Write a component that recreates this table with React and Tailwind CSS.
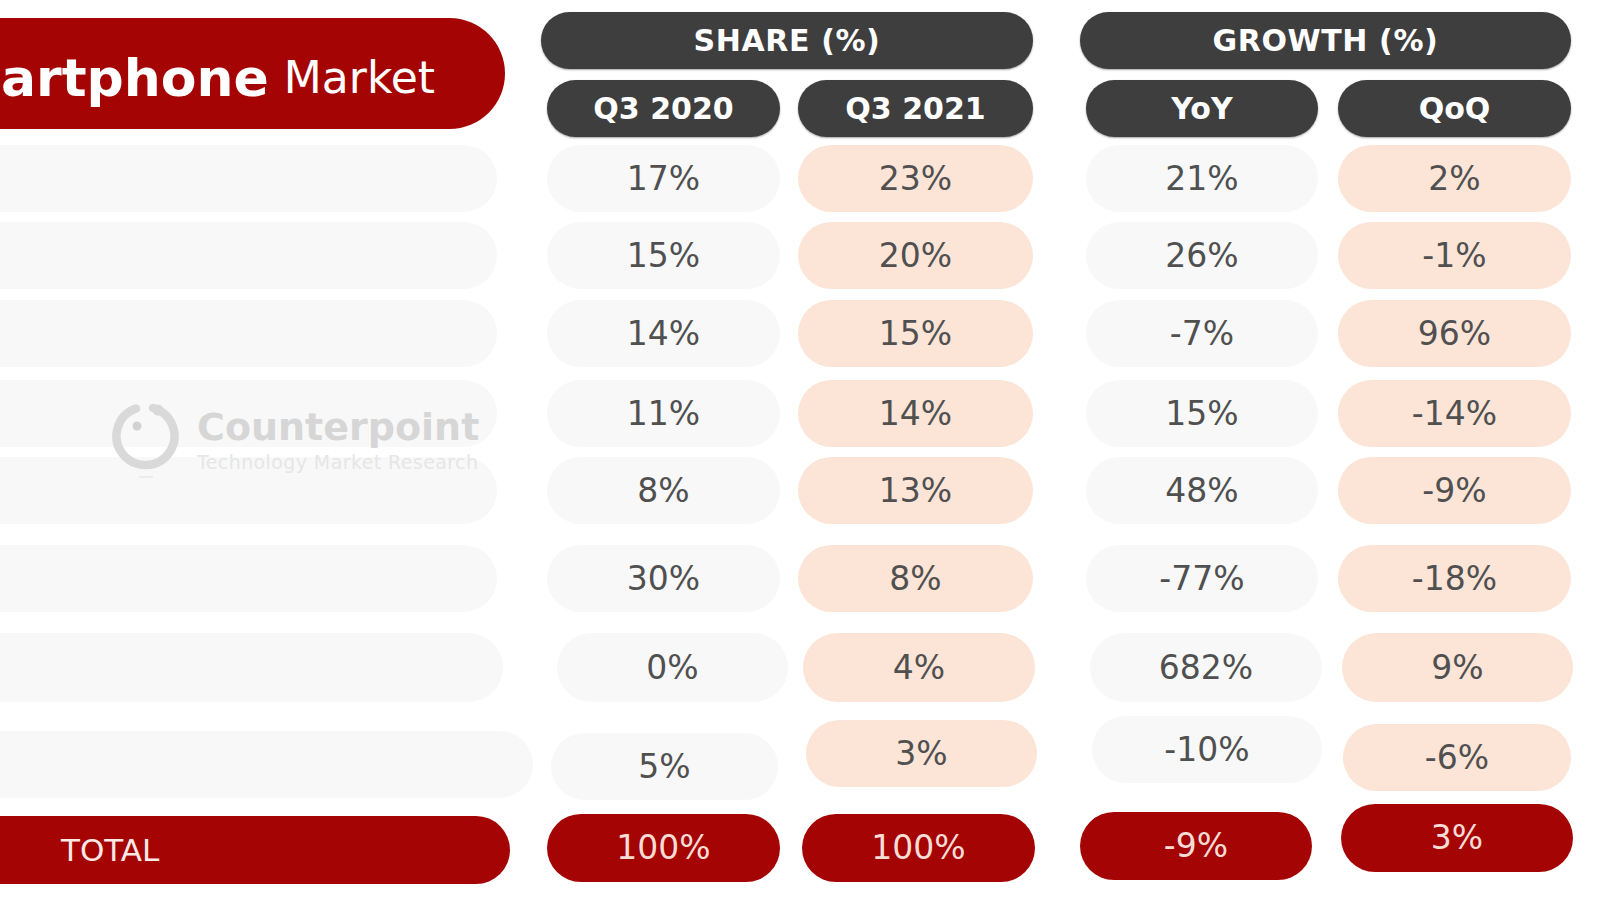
import React from "react";

// share / growth table, rows 1-6 use the same column spacing
const std = {
  h: "h-[67px]",
  cells: [
    "w-[497px]",
    "ml-[50px] w-[233px]",
    "ml-[18px] w-[235px]",
    "ml-[53px] w-[232px]",
    "ml-[20px] w-[233px]",
  ],
};

const rows = [
  { rowH: "h-[77px]", vals: ["17%", "23%", "21%", "2%"], ...std },
  { rowH: "h-[78px]", vals: ["15%", "20%", "26%", "-1%"], ...std },
  { rowH: "h-[80px]", vals: ["14%", "15%", "-7%", "96%"], ...std },
  { rowH: "h-[77px]", vals: ["11%", "14%", "15%", "-14%"], ...std },
  { rowH: "h-[88px]", vals: ["8%", "13%", "48%", "-9%"], ...std },
  { rowH: "h-[88px]", vals: ["30%", "8%", "-77%", "-18%"], ...std },
  {
    rowH: "h-[83px]",
    vals: ["0%", "4%", "682%", "9%"],
    h: "h-[69px]",
    cells: [
      "w-[503px]",
      "ml-[54px] w-[231px]",
      "ml-[15px] w-[232px]",
      "ml-[55px] w-[232px]",
      "ml-[20px] w-[231px]",
    ],
  },
  {
    rowH: "h-[88px]",
    vals: ["5%", "3%", "-10%", "-6%"],
    h: "h-[67px]",
    cells: [
      "w-[533px] mt-[15px]",
      "ml-[18px] w-[227px] mt-[17px]",
      "ml-[28px] w-[231px] mt-[4px]",
      "ml-[55px] w-[230px]",
      "ml-[21px] w-[228px] mt-[8px]",
    ],
  },
];

const total = {
  vals: ["100%", "100%", "-9%", "3%"],
  cells: [
    "w-[510px] mt-[12px]",
    "ml-[37px] w-[233px] mt-[10px]",
    "ml-[22px] w-[233px] mt-[10px]",
    "ml-[45px] w-[232px] mt-[8px]",
    "ml-[29px] w-[232px]",
  ],
};

const cellBg = ["bg-[#f8f8f8]", "bg-[#fce4d7]", "bg-[#f8f8f8]", "bg-[#fce4d7]"];

function Watermark() {
  return (
    <div className="absolute left-[110px] top-[398px] flex items-start pointer-events-none">
      <svg width="72" height="82" viewBox="0 0 72 82">
        <path
          d="M43 10 A29 29 0 1 1 26 10.6"
          fill="none"
          stroke="#d9d9d9"
          strokeWidth="8.5"
          strokeLinecap="round"
        />
        <circle cx="48" cy="12" r="5.5" fill="#d9d9d9" />
        <circle cx="27" cy="28" r="4.5" fill="#d2d2d2" />
        <line x1="29" y1="79" x2="43" y2="79" stroke="#ececec" strokeWidth="2" />
      </svg>
      <div className="ml-[15px] flex flex-col">
        <span className="text-[38px] font-bold leading-none text-[#d6d6d6] mt-[10px]">
          Counterpoint
        </span>
        <span className="text-[19px] leading-none text-[#e6e6e6] mt-[7px] tracking-[0.4px]">
          Technology Market Research
        </span>
      </div>
    </div>
  );
}

export default function App() {
  return (
    <div className="relative w-[1600px] h-[900px] overflow-hidden bg-white font-['DejaVu_Sans',Verdana,sans-serif]">
      {/* header */}
      <div className="flex items-start h-[145px]">
        <div className="mt-[18px] h-[111px] w-[505px] rounded-r-full bg-[#a50404] flex items-center pt-[8px] pl-[1px]">
          <span className="text-[52px] font-bold text-white whitespace-nowrap">artphone</span>
          <span className="ml-[15px] text-[44px] text-white whitespace-nowrap">Market</span>
        </div>

        <div className="ml-[36px] mt-[12px] w-[492px]">
          <div className="h-[57px] rounded-full bg-[#3e3e3e] shadow-[0_1px_2px_rgba(0,0,0,0.35)] flex items-center justify-center text-[30px] font-bold tracking-[0.6px] text-white">
            SHARE (%)
          </div>
          <div className="mt-[11px] flex">
            <div className="ml-[6px] w-[233px] h-[57px] rounded-full bg-[#3e3e3e] shadow-[0_1px_2px_rgba(0,0,0,0.35)] flex items-center justify-center text-[30px] font-bold text-white">
              Q3 2020
            </div>
            <div className="ml-[18px] w-[235px] h-[57px] rounded-full bg-[#3e3e3e] shadow-[0_1px_2px_rgba(0,0,0,0.35)] flex items-center justify-center text-[30px] font-bold text-white">
              Q3 2021
            </div>
          </div>
        </div>

        <div className="ml-[47px] mt-[12px] w-[491px]">
          <div className="h-[57px] rounded-full bg-[#3e3e3e] shadow-[0_1px_2px_rgba(0,0,0,0.35)] flex items-center justify-center text-[30px] font-bold tracking-[0.6px] text-white">
            GROWTH (%)
          </div>
          <div className="mt-[11px] flex">
            <div className="ml-[6px] w-[232px] h-[57px] rounded-full bg-[#3e3e3e] shadow-[0_1px_2px_rgba(0,0,0,0.35)] flex items-center justify-center text-[30px] font-bold text-white">
              YoY
            </div>
            <div className="ml-[20px] w-[233px] h-[57px] rounded-full bg-[#3e3e3e] shadow-[0_1px_2px_rgba(0,0,0,0.35)] flex items-center justify-center text-[30px] font-bold text-white">
              QoQ
            </div>
          </div>
        </div>
      </div>

      {/* data rows */}
      {rows.map((row, i) => (
        <div key={i} className={"flex items-start " + row.rowH}>
          <div className={row.cells[0] + " " + row.h + " rounded-r-full bg-[#f8f8f8]"} />
          {row.vals.map((v, j) => (
            <div
              key={j}
              className={
                row.cells[j + 1] +
                " " +
                row.h +
                " rounded-full flex items-center justify-center text-[33px] text-[#505050] " +
                cellBg[j]
              }
            >
              {v}
            </div>
          ))}
        </div>
      ))}

      {/* total */}
      <div className="flex items-start">
        <div
          className={
            total.cells[0] +
            " h-[68px] rounded-r-full bg-[#a50404] flex items-center pl-[61px] text-[31px] text-[#fbe9e6]"
          }
        >
          TOTAL
        </div>
        {total.vals.map((v, j) => (
          <div
            key={j}
            className={
              total.cells[j + 1] +
              " h-[68px] rounded-full bg-[#a50404] flex items-center justify-center text-[33px] text-[#f8dcd6]"
            }
          >
            {v}
          </div>
        ))}
      </div>

      <Watermark />
    </div>
  );
}
